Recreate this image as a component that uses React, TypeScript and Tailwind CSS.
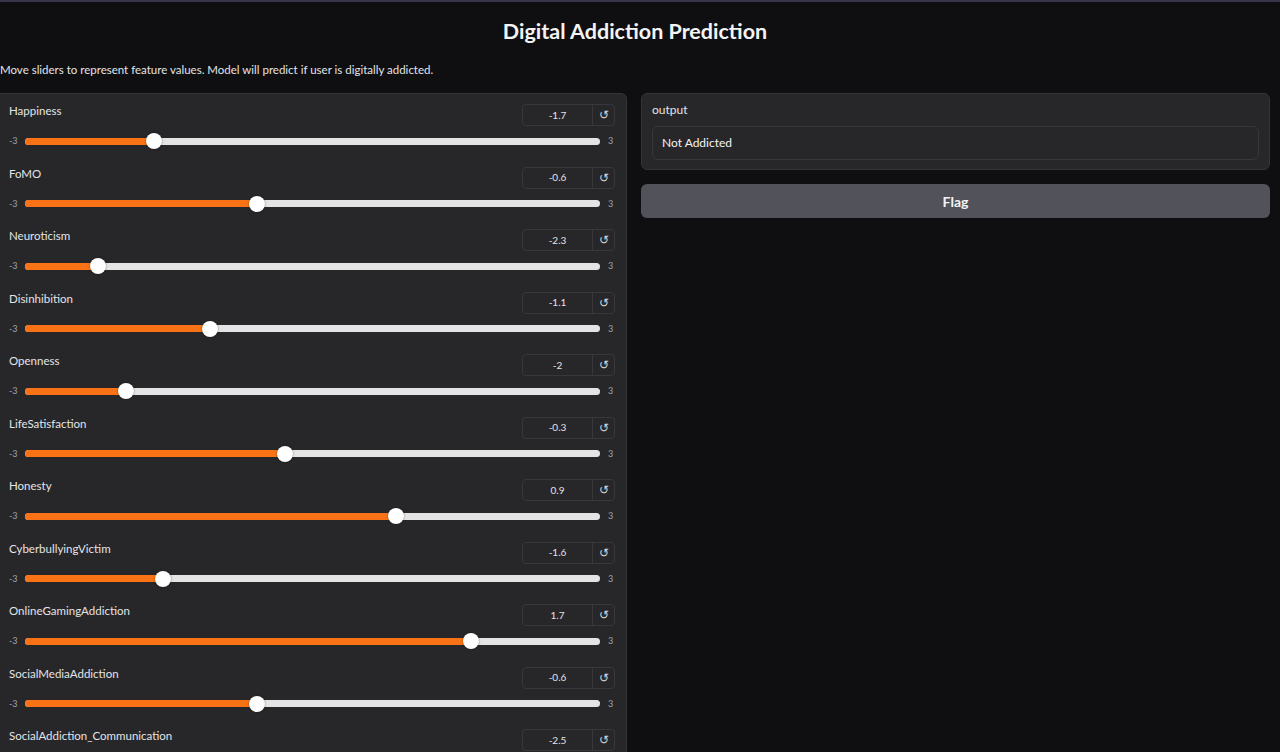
import React from "react";

type Feature = { name: string; value: number };

const features: Feature[] = [
  { name: "Happiness", value: -1.7 },
  { name: "FoMO", value: -0.6 },
  { name: "Neuroticism", value: -2.3 },
  { name: "Disinhibition", value: -1.1 },
  { name: "Openness", value: -2 },
  { name: "LifeSatisfaction", value: -0.3 },
  { name: "Honesty", value: 0.9 },
  { name: "CyberbullyingVictim", value: -1.6 },
  { name: "OnlineGamingAddiction", value: 1.7 },
  { name: "SocialMediaAddiction", value: -0.6 },
  { name: "SocialAddiction_Communication", value: -2.5 },
];

function SliderRow({ name, value }: Feature) {
  const frac = (value + 3) / 6;
  // thumb stays inside the track, like a native range input
  const pos = `calc(8px + (100% - 16px) * ${frac})`;
  return (
    <div className="h-[62.5px] pt-[10px]">
      <div className="flex h-[22px] items-start justify-between pl-[9px]">
        <span className="-mt-[1px] text-[11.5px] leading-[16px] text-[#e4e4e7]">{name}</span>
        <div className="flex h-[22px] w-[93px] rounded-[4px] border border-[#37373c]">
          <div className="flex w-[70px] items-center justify-center border-r border-[#37373c] text-[10px] text-[#e4e4e7]">
            {value}
          </div>
          <div className="flex flex-1 items-center justify-center text-[12px] text-[#d4d4d8]">↺</div>
        </div>
      </div>
      <div className="mt-[8px] flex h-[14px] items-center pl-[9px]">
        <span className="w-[16px] text-[9px] text-[#a1a1aa]">-3</span>
        <div className="relative h-[7px] flex-1 rounded-full bg-[#e4e4e4]">
          <div className="absolute left-0 top-0 h-full rounded-full bg-[#f97316]" style={{ width: pos }} />
          <div
            className="absolute top-1/2 h-[16px] w-[16px] -translate-x-1/2 -translate-y-1/2 rounded-full bg-white shadow-[0_0_2px_rgba(0,0,0,0.5)]"
            style={{ left: pos }}
          />
        </div>
        <span className="w-[15px] pl-[8px] text-[9px] text-[#a1a1aa]">3</span>
      </div>
    </div>
  );
}

export default function App() {
  return (
    <div className="h-[752px] overflow-hidden bg-[#0f0f11] font-['Lato',sans-serif] text-[#e4e4e7]">
      <div className="h-[2px] bg-[#38364a]" />
      <div className="w-[1270px]">
        <h1 className="pt-[16px] text-center text-[21.5px] font-bold leading-[26px] text-[#f4f4f5]">
          Digital Addiction Prediction
        </h1>
        <p className="mt-[18px] text-[11.5px] leading-[16px] text-[#e4e4e7]">
          Move sliders to represent feature values. Model will predict if user is digitally addicted.
        </p>
        <div className="mt-[15px] flex items-start gap-[14px]">
          <div className="w-[627px] shrink-0 rounded-r-[6px] border border-l-0 border-[#333338] bg-[#27272a] pr-[11px]">
            {features.map((f) => (
              <SliderRow key={f.name} {...f} />
            ))}
          </div>
          <div className="flex flex-1 flex-col gap-[14px]">
            <div className="rounded-[6px] border border-[#333338] bg-[#27272a] px-[10px] pb-[9px] pt-[8px]">
              <div className="text-[12px] leading-[16px] text-[#e4e4e7]">output</div>
              <div className="mt-[8px] flex h-[34px] items-center rounded-[6px] border border-[#37373c] px-[9px] text-[12px] text-[#f4f4f5]">
                Not Addicted
              </div>
            </div>
            <button className="h-[34px] rounded-[6px] bg-[#52525b] text-[14px] font-bold text-[#f4f4f5]">
              Flag
            </button>
          </div>
        </div>
      </div>
    </div>
  );
}
